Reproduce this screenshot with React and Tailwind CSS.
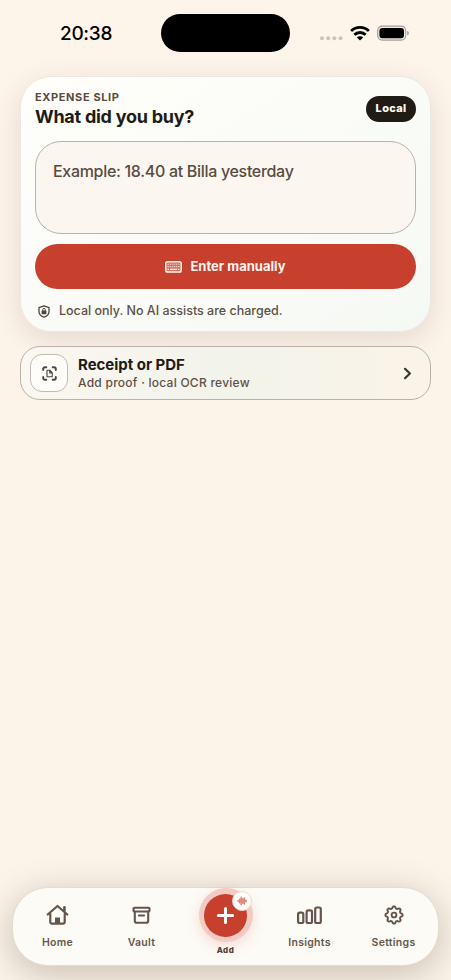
import React from 'react';

function StatusBar() {
  return (
    <header className="flex h-[77px] shrink-0 items-start pt-[14px]">
      <div className="w-[161px] pl-[60px] pt-[6px] text-[19px] leading-[28px] font-medium tracking-[-0.3px] text-black">20:38</div>
      <div className="h-[38px] w-[129px] rounded-full bg-black" />
      <div className="flex items-center pl-[29px] pt-[10px]">
        <svg width="25" height="18" viewBox="0 0 25 18" fill="#cbc4ba">
          <circle cx="3" cy="14.3" r="2" /><circle cx="9.2" cy="14.3" r="2" /><circle cx="15.4" cy="14.3" r="2" /><circle cx="21.5" cy="14.3" r="2" />
        </svg>
        <svg className="ml-[6px]" width="20" height="18" viewBox="0 0 20 18" fill="none" stroke="#000" strokeWidth="2.8">
          <path d="M1.1 7.1a12.7 12.7 0 0 1 17.8 0" />
          <path d="M4.4 10.8a8 8 0 0 1 11.2 0" />
          <path d="M10 16.6 6.9 13.6a4.3 4.3 0 0 1 6.2 0Z" fill="#000" stroke="none" />
        </svg>
        <svg className="ml-[7px]" width="33" height="18" viewBox="0 0 33 18">
          <rect x=".7" y="2.1" width="28" height="14" rx="4.5" fill="#f1eae1" stroke="#a39d95" strokeWidth="1.1" />
          <rect x="2.4" y="3.9" width="24.6" height="10.4" rx="3" fill="#000" />
          <path d="M30.2 6.8c2.2.8 2.2 3.8 0 4.6Z" fill="#a39d95" />
        </svg>
      </div>
    </header>
  );
}

const KEY_COLUMNS = [3.3, 5.4, 7.5, 9.6, 11.7, 13.8];

function KeyboardIcon() {
  return (
    <svg width="17" height="12" viewBox="0 0 17 12" fill="none" stroke="#fff5ef">
      <rect x=".75" y=".75" width="15.5" height="10.3" rx="1.8" strokeWidth="1.5" fill="#d66f60" />
      {KEY_COLUMNS.map((x) => (
        <g key={x} strokeWidth="1.1" opacity=".65">
          <path d={`M${x - 0.7} 3.3h1.4M${x - 0.7} 5.6h1.4`} />
        </g>
      ))}
      <path d="M2.6 8.4h1.5M5 8.4h7M12.9 8.4h1.5" strokeWidth="1.2" />
    </svg>
  );
}

function ShieldLockIcon() {
  return (
    <svg width="12" height="13" viewBox="0 0 12 13" fill="none" stroke="#4d443c" strokeWidth="1.3" strokeLinejoin="round">
      <path d="M6 .8 11 2.6v4.1c0 2.6-2 4.3-5 5.5C3 11 1 9.3 1 6.7V2.6Z" />
      <rect x="3.6" y="5.4" width="4.8" height="3.9" rx=".7" fill="#4d443c" stroke="none" />
      <path d="M4.7 5.8V4.7a1.3 1.3 0 0 1 2.6 0v1.1" strokeWidth="1" />
    </svg>
  );
}

function ScanDocIcon() {
  return (
    <svg width="15" height="15" viewBox="0 0 15 15" fill="none" stroke="#4d443c" strokeLinecap="round" strokeLinejoin="round">
      <path d="M1.2 4V3A1.8 1.8 0 0 1 3 1.2h1.3M10.7 1.2H12A1.8 1.8 0 0 1 13.8 3v1M13.8 11v1a1.8 1.8 0 0 1-1.8 1.8h-1.3M4.3 13.8H3A1.8 1.8 0 0 1 1.2 12v-1" strokeWidth="1.9" />
      <path d="M5 4.2h2.8l2.4 2.4v4.2H5Z M7.7 4.4V6.9H10" strokeWidth="1.1" />
    </svg>
  );
}

function ExpenseCard() {
  return (
    <section className="h-[256px] rounded-[31px] border border-[#ebe8e1] bg-linear-to-br from-[#fffefa] to-[#f5f9f4] px-[14px] pt-[12px] shadow-[0_8px_28px_rgba(100,60,55,0.14)]">
      <div className="flex h-[52px] items-start justify-between">
        <div>
          <p className="pt-[1px] text-[11px] leading-[14px] font-bold tracking-[0.62px] text-[#5b4a40]">EXPENSE SLIP</p>
          <h1 className="mt-[1px] whitespace-nowrap text-[18px] leading-[24px] font-bold tracking-[-0.26px] text-[#211b16]">What did you buy?</h1>
        </div>
        <span className="mt-[7px] flex h-[26px] w-[50px] items-center justify-center rounded-full bg-[#211b16] pb-px text-[11px] font-extrabold tracking-[0.3px] text-[#fffaf4]">Local</span>
      </div>
      <div className="h-[93px] rounded-[26px] border border-[#b9b2aa] bg-[#fbf6f0] px-[17px] pt-[17px] text-[16px] leading-[24px] font-medium tracking-[-0.31px] text-[#574c42]">
        Example: 18.40 at Billa yesterday
      </div>
      <button className="mt-[10px] flex h-[45px] w-full items-center justify-center gap-[8px] rounded-full bg-[#c73f2d] text-[13px] font-bold tracking-[0.02px] text-[#fff5ef]">
        <KeyboardIcon />
        <span>Enter manually</span>
      </button>
      <div className="mt-[13px] flex items-center gap-[9px] pl-[3px] text-[12.5px] leading-[18px] font-medium text-[#5d5146]">
        <ShieldLockIcon />
        <span className="whitespace-nowrap">Local only. No AI assists are charged.</span>
      </div>
    </section>
  );
}

function ReceiptRow() {
  return (
    <button className="mt-[14px] flex h-[54px] items-center rounded-[20px] border border-[#bab1a7] bg-linear-to-r from-[#fbf7f1] via-[#f2f3eb] to-[#fbf3e8] pl-[9px] pr-[18px] text-left">
      <span className="flex size-[38px] items-center justify-center rounded-[12px] border border-[#c1bbb3] bg-[#fefdf9]">
        <ScanDocIcon />
      </span>
      <span className="ml-[10px] flex flex-1 flex-col">
        <span className="text-[15px] leading-[19px] font-bold tracking-[-0.02px] text-[#211b16]">Receipt or PDF</span>
        <span className="text-[12px] leading-[17px] font-medium tracking-[0.26px] text-[#5d5146]">Add proof · local OCR review</span>
      </span>
      <svg width="9" height="13" viewBox="0 0 9 13" fill="none" stroke="#3e352d" strokeWidth="2.2" strokeLinecap="round" strokeLinejoin="round">
        <path d="m2 1.800 4.900 4.700L2 11.200" />
      </svg>
    </button>
  );
}

function HomeIcon() {
  return (
    <svg width="24" height="22" viewBox="0 0 24 22" fill="none" stroke="#64564b" strokeWidth="2.2" strokeLinecap="round" strokeLinejoin="round">
      <path d="M1.7 10.5 11.5 2l9.8 8.5M4.3 10v8.3a1.3 1.3 0 0 0 1.3 1.3h11.8a1.3 1.3 0 0 0 1.3-1.3V10" />
      <path d="M18.4 6.8V3.3" strokeWidth="2.6" />
      <path d="M9 19.5v-6h5v6Z" fill="#64564b" stroke="none" />
    </svg>
  );
}

function VaultIcon() {
  return (
    <svg width="20" height="19" viewBox="0 0 20 19" fill="none" stroke="#64564b" strokeWidth="2.1" strokeLinecap="round" strokeLinejoin="round">
      <rect x="1.5" y="1.7" width="16" height="3.8" rx="1" />
      <path d="M2.8 5.7v9a2.1 2.1 0 0 0 2.1 2.1h9.2a2.1 2.1 0 0 0 2.1-2.1v-9M7 9.5h5" />
    </svg>
  );
}

function InsightsIcon() {
  return (
    <svg width="26" height="19" viewBox="0 0 26 19" fill="none" stroke="#64564b" strokeWidth="2.2">
      <rect x="1.1" y="6.700" width="5.2" height="10.300" rx="1.6" />
      <rect x="9.6" y="4.300" width="5.400" height="12.700" rx="1.6" />
      <rect x="18.200" y="1.500" width="5.600" height="15.500" rx="1.6" />
    </svg>
  );
}

// Eight rounded teeth: the radius swells and shrinks once per tooth.
const GEAR_PATH = Array.from({ length: 97 }, (_, i) => {
  const angle = (i / 96) * Math.PI * 2;
  const radius = 7.65 + 1.05 * Math.tanh(1.6 * Math.cos(angle * 8));
  const x = 10 + radius * Math.sin(angle);
  const y = 10 - radius * Math.cos(angle);
  return `${i ? 'L' : 'M'}${x.toFixed(2)} ${y.toFixed(2)}`;
}).join('') + 'Z';

function SettingsIcon() {
  return (
    <svg width="20" height="20" viewBox="0 0 20 20" fill="none" stroke="#64564b" strokeWidth="1.9" strokeLinejoin="round">
      <path d={GEAR_PATH} />
      <circle cx="10" cy="10" r="2.4" />
    </svg>
  );
}

function NavItem({ icon, label }) {
  return (
    <button className="flex w-[84px] flex-col items-center pt-[15px]">
      <span className="flex h-[24px] items-center justify-center">{icon}</span>
      <span className="mt-[9px] text-[10.5px] leading-[14px] font-semibold tracking-[0.28px] text-[#64564b]">{label}</span>
    </button>
  );
}

function AddItem() {
  return (
    <button className="flex w-[84px] flex-col items-center">
      <span className="relative flex size-[54px] items-center justify-center rounded-full bg-[#f1cbc4] shadow-[0_4px_14px_rgba(199,63,45,0.17)]">
        <span className="flex size-[43px] items-center justify-center rounded-full bg-[#c73f2d]">
          <svg width="19" height="19" viewBox="0 0 19 19" stroke="#fffaf5" strokeWidth="3" strokeLinecap="round">
            <path d="M9.5 2.4v14.2M2.4 9.5h14.2" />
          </svg>
        </span>
        <span className="absolute left-[33px] top-[3px] flex size-[20px] items-center justify-center rounded-full border border-[#f5d8d1] bg-[#fffdfa]">
          <svg width="10" height="10" viewBox="0 0 10 10" stroke="#dd8475" strokeWidth="1.5" strokeLinecap="round">
            <path d="M1 4.7v.6M2.6 3.3v3.4M4.2 1.3v7.4M5.8 2.7v4.6M7.4 2v6M9 4.2v1.6" />
          </svg>
        </span>
      </span>
      <span className="mt-[3px] text-[8px] leading-[10px] font-extrabold tracking-[0.5px] text-[#4d4138]">Add</span>
    </button>
  );
}

export default function App() {
  return (
    <div className="flex h-[980px] w-[451px] flex-col overflow-hidden bg-linear-to-b from-[#fdf4ea] to-[#fbf4e9] font-['Inter','Liberation_Sans',sans-serif]">
      <StatusBar />
      <main className="mx-[20px] -mt-px flex flex-1 flex-col">
        <ExpenseCard />
        <ReceiptRow />
      </main>
      <nav className="mx-[12px] mb-[14px] flex h-[79px] shrink-0 justify-center rounded-[36px] border border-[#e2dcd2] bg-[#fdfbf6] shadow-[0_8px_36px_rgba(75,50,35,0.28)]">
        <NavItem icon={<HomeIcon />} label="Home" />
        <NavItem icon={<VaultIcon />} label="Vault" />
        <AddItem />
        <NavItem icon={<InsightsIcon />} label="Insights" />
        <NavItem icon={<SettingsIcon />} label="Settings" />
      </nav>
    </div>
  );
}
